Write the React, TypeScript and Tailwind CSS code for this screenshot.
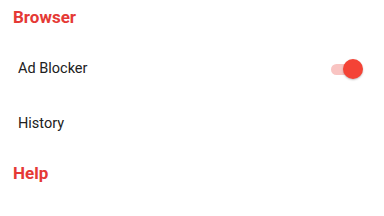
export default function App() {
  return (
    <div className="h-[216px] w-[384px] overflow-hidden bg-white font-['Roboto',sans-serif]">
      <div className="flex h-[41px] items-center px-[13px] pb-[5px] text-[17px] font-bold text-[#e53935]">
        Browser
      </div>
      <div className="flex h-[55px] items-center justify-between pl-[18px] pr-[21px] text-[14.5px] text-[#212121]">
        <span>Ad Blocker</span>
        <div className="relative h-[20px] w-[32px]">
          <div className="absolute left-0 right-[4px] top-[5px] h-[11px] rounded-full bg-[#f9c4c2]" />
          <div className="absolute right-0 top-0 h-[20px] w-[20px] rounded-full bg-[#f44336] shadow-[0_1px_2px_rgba(0,0,0,0.25)]" />
        </div>
      </div>
      <div className="flex h-[55px] items-center pl-[18px] text-[14.5px] text-[#212121]">
        History
      </div>
      <div className="flex h-[41px] items-center px-[13px] pt-[5px] text-[17px] font-bold text-[#e53935]">
        Help
      </div>
    </div>
  );
}
